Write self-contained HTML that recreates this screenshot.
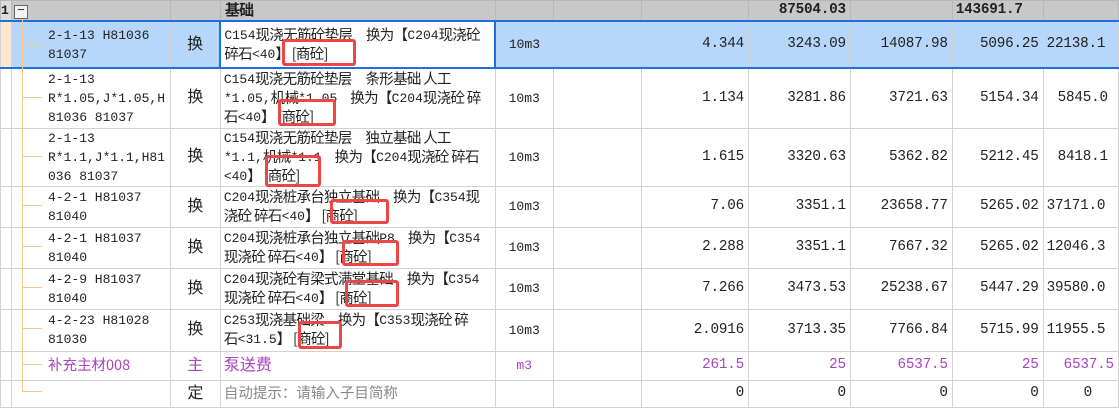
<!DOCTYPE html>
<html><head><meta charset="utf-8"><style>
body{margin:0;width:1119px;height:410px;overflow:hidden;background:#fff;position:relative;font-family:"Liberation Mono","Noto Sans CJK SC",monospace;font-size:13px;color:#222}
table{border-collapse:collapse;table-layout:fixed;position:absolute;left:0;top:0}
td{border:1px solid #d2d2d2;padding:0 4px;white-space:nowrap;overflow:hidden;line-height:19px;vertical-align:middle}
.h td{background:#c8c8c8;font-weight:bold;border-color:#b8b8b8}
.n{text-align:right;font-size:14.3px;letter-spacing:-0.2px}
.c{text-align:center;font-family:"Liberation Sans","Noto Sans CJK SC",sans-serif;font-size:16px;line-height:18px}
.u{text-align:center;font-size:13px}
.code{padding-left:36px;font-size:13px;line-height:19px}
.d{font-size:13px;line-height:19px;padding-left:3px}
.k{font-family:"Noto Sans CJK SC",sans-serif;font-size:14.5px;letter-spacing:-0.7px;line-height:0;vertical-align:-1px}
.sel td{background:#b6d6fa;border-top:2px solid #1f6fe0;border-bottom:2px solid #1f6fe0}
.sel td.w{background:#fff;border:2px solid #1f6fe0}
.p td{color:#a844c0}
.g{color:#888}
.red{position:absolute;border:3px solid #ec4646;border-radius:3px;box-sizing:border-box}
.tv{position:absolute;left:22px;width:1px;background:#f5c98d}
.th{position:absolute;left:22px;width:20px;height:1px;background:#f5c98d}
</style></head><body>
<table>
<colgroup><col style="width:11px"><col style="width:159px"><col style="width:50px"><col style="width:275px"><col style="width:58px"><col style="width:89px"><col style="width:107px"><col style="width:102px"><col style="width:102px"><col style="width:91px"><col style="width:75px"></colgroup>
<tr class="h" style="height:20px"><td style="padding:0;background:#ddd">1</td><td style="padding-left:2px"><span style="display:inline-block;width:12px;height:12px;border:1px solid #666;background:#f4f4f4;line-height:10px;text-align:center;font-weight:normal">−</span></td><td></td><td><span class="k" style="font-size:15px">基础</span></td><td></td><td></td><td></td><td class="n">87504.03</td><td></td><td class="n" style="text-align:left;padding-left:3px">143691.7</td><td></td></tr>
<tr class="sel" style="height:47px"><td style="background:#fde9cf"></td><td class="code">2-1-13 H81036<br>81037</td><td class="c">换</td><td class="d w">C154<span class="k">现浇无筋砼垫层　换为【</span>C204<span class="k">现浇砼</span><br><span class="k">碎石</span>&lt;40<span class="k">】 [商砼]</span></td><td class="u">10m3</td><td></td><td class="n">4.344</td><td class="n">3243.09</td><td class="n">14087.98</td><td class="n">5096.25</td><td class="n" style="text-align:left;padding-left:3px">22138.1</td></tr>
<tr style="height:60px"><td></td><td class="code">2-1-13<br>R*1.05,J*1.05,H<br>81036 81037</td><td class="c">换</td><td class="d">C154<span class="k">现浇无筋砼垫层　条形基础 人工</span><br>*1.05,<span class="k">机械</span>*1.05　<span class="k">换为【</span>C204<span class="k">现浇砼 碎</span><br><span class="k">石</span>&lt;40<span class="k">】 [商砼]</span></td><td class="u">10m3</td><td></td><td class="n">1.134</td><td class="n">3281.86</td><td class="n">3721.63</td><td class="n">5154.34</td><td class="n" style="text-align:left;padding-left:14px">5845.0</td></tr>
<tr style="height:58px"><td></td><td class="code">2-1-13<br>R*1.1,J*1.1,H81<br>036 81037</td><td class="c">换</td><td class="d">C154<span class="k">现浇无筋砼垫层　独立基础 人工</span><br>*1.1,<span class="k">机械</span>*1.1　<span class="k">换为【</span>C204<span class="k">现浇砼 碎石</span><br>&lt;40<span class="k">】 [商砼]</span></td><td class="u">10m3</td><td></td><td class="n">1.615</td><td class="n">3320.63</td><td class="n">5362.82</td><td class="n">5212.45</td><td class="n" style="text-align:left;padding-left:14px">8418.1</td></tr>
<tr style="height:41px"><td></td><td class="code">4-2-1 H81037<br>81040</td><td class="c">换</td><td class="d">C204<span class="k">现浇桩承台独立基础　换为【</span>C354<span class="k">现</span><br><span class="k">浇砼 碎石</span>&lt;40<span class="k">】 [商砼]</span></td><td class="u">10m3</td><td></td><td class="n">7.06</td><td class="n">3351.1</td><td class="n">23658.77</td><td class="n">5265.02</td><td class="n" style="text-align:left;padding-left:3px">37171.0</td></tr>
<tr style="height:41px"><td></td><td class="code">4-2-1 H81037<br>81040</td><td class="c">换</td><td class="d">C204<span class="k">现浇桩承台独立基础</span>P8　<span class="k">换为【</span>C354<br><span class="k">现浇砼 碎石</span>&lt;40<span class="k">】 [商砼]</span></td><td class="u">10m3</td><td></td><td class="n">2.288</td><td class="n">3351.1</td><td class="n">7667.32</td><td class="n">5265.02</td><td class="n" style="text-align:left;padding-left:3px">12046.3</td></tr>
<tr style="height:41px"><td></td><td class="code">4-2-9 H81037<br>81040</td><td class="c">换</td><td class="d">C204<span class="k">现浇砼有梁式满堂基础　换为【</span>C354<br><span class="k">现浇砼 碎石</span>&lt;40<span class="k">】 [商砼]</span></td><td class="u">10m3</td><td></td><td class="n">7.266</td><td class="n">3473.53</td><td class="n">25238.67</td><td class="n">5447.29</td><td class="n" style="text-align:left;padding-left:3px">39580.0</td></tr>
<tr style="height:42px"><td></td><td class="code">4-2-23 H81028<br>81030</td><td class="c">换</td><td class="d">C253<span class="k">现浇基础梁　换为【</span>C353<span class="k">现浇砼 碎</span><br><span class="k">石</span>&lt;31.5<span class="k">】 [商砼]</span></td><td class="u">10m3</td><td></td><td class="n">2.0916</td><td class="n">3713.35</td><td class="n">7766.84</td><td class="n">5715.99</td><td class="n" style="text-align:left;padding-left:3px">11955.5</td></tr>
<tr class="p" style="height:29px"><td></td><td class="code"><span class="k" style="font-size:14.5px;letter-spacing:0">补充主材008</span></td><td class="c">主</td><td style="padding-left:3px"><span class="k" style="font-size:16px;letter-spacing:0">泵送费</span></td><td class="u">m3</td><td></td><td class="n">261.5</td><td class="n">25</td><td class="n">6537.5</td><td class="n">25</td><td class="n" style="text-align:left;padding-left:20px">6537.5</td></tr>
<tr style="height:27px"><td></td><td class="code"></td><td class="c">定</td><td class="g" style="padding-left:3px"><span class="k" style="letter-spacing:0">自动提示：请输入子目简称</span></td><td></td><td></td><td class="n">0</td><td class="n">0</td><td class="n">0</td><td class="n">0</td><td class="n" style="text-align:left;padding-left:40px">0</td></tr>
</table>
<div class="tv" style="top:20px;height:372px"></div>
<div class="th" style="top:44px"></div><div class="th" style="top:97px"></div><div class="th" style="top:156px"></div><div class="th" style="top:205px"></div><div class="th" style="top:246px"></div><div class="th" style="top:287px"></div><div class="th" style="top:328px"></div><div class="th" style="top:364px"></div><div class="th" style="top:391px"></div>
<div class="red" style="left:282px;top:39px;width:74px;height:27px"></div>
<div class="red" style="left:278px;top:99px;width:58px;height:27px"></div>
<div class="red" style="left:265px;top:155px;width:56px;height:32px"></div>
<div class="red" style="left:330px;top:199px;width:59px;height:25px"></div>
<div class="red" style="left:342px;top:240px;width:57px;height:26px"></div>
<div class="red" style="left:345px;top:280px;width:54px;height:27px"></div>
<div class="red" style="left:298px;top:321px;width:44px;height:28px"></div>
</body></html>
